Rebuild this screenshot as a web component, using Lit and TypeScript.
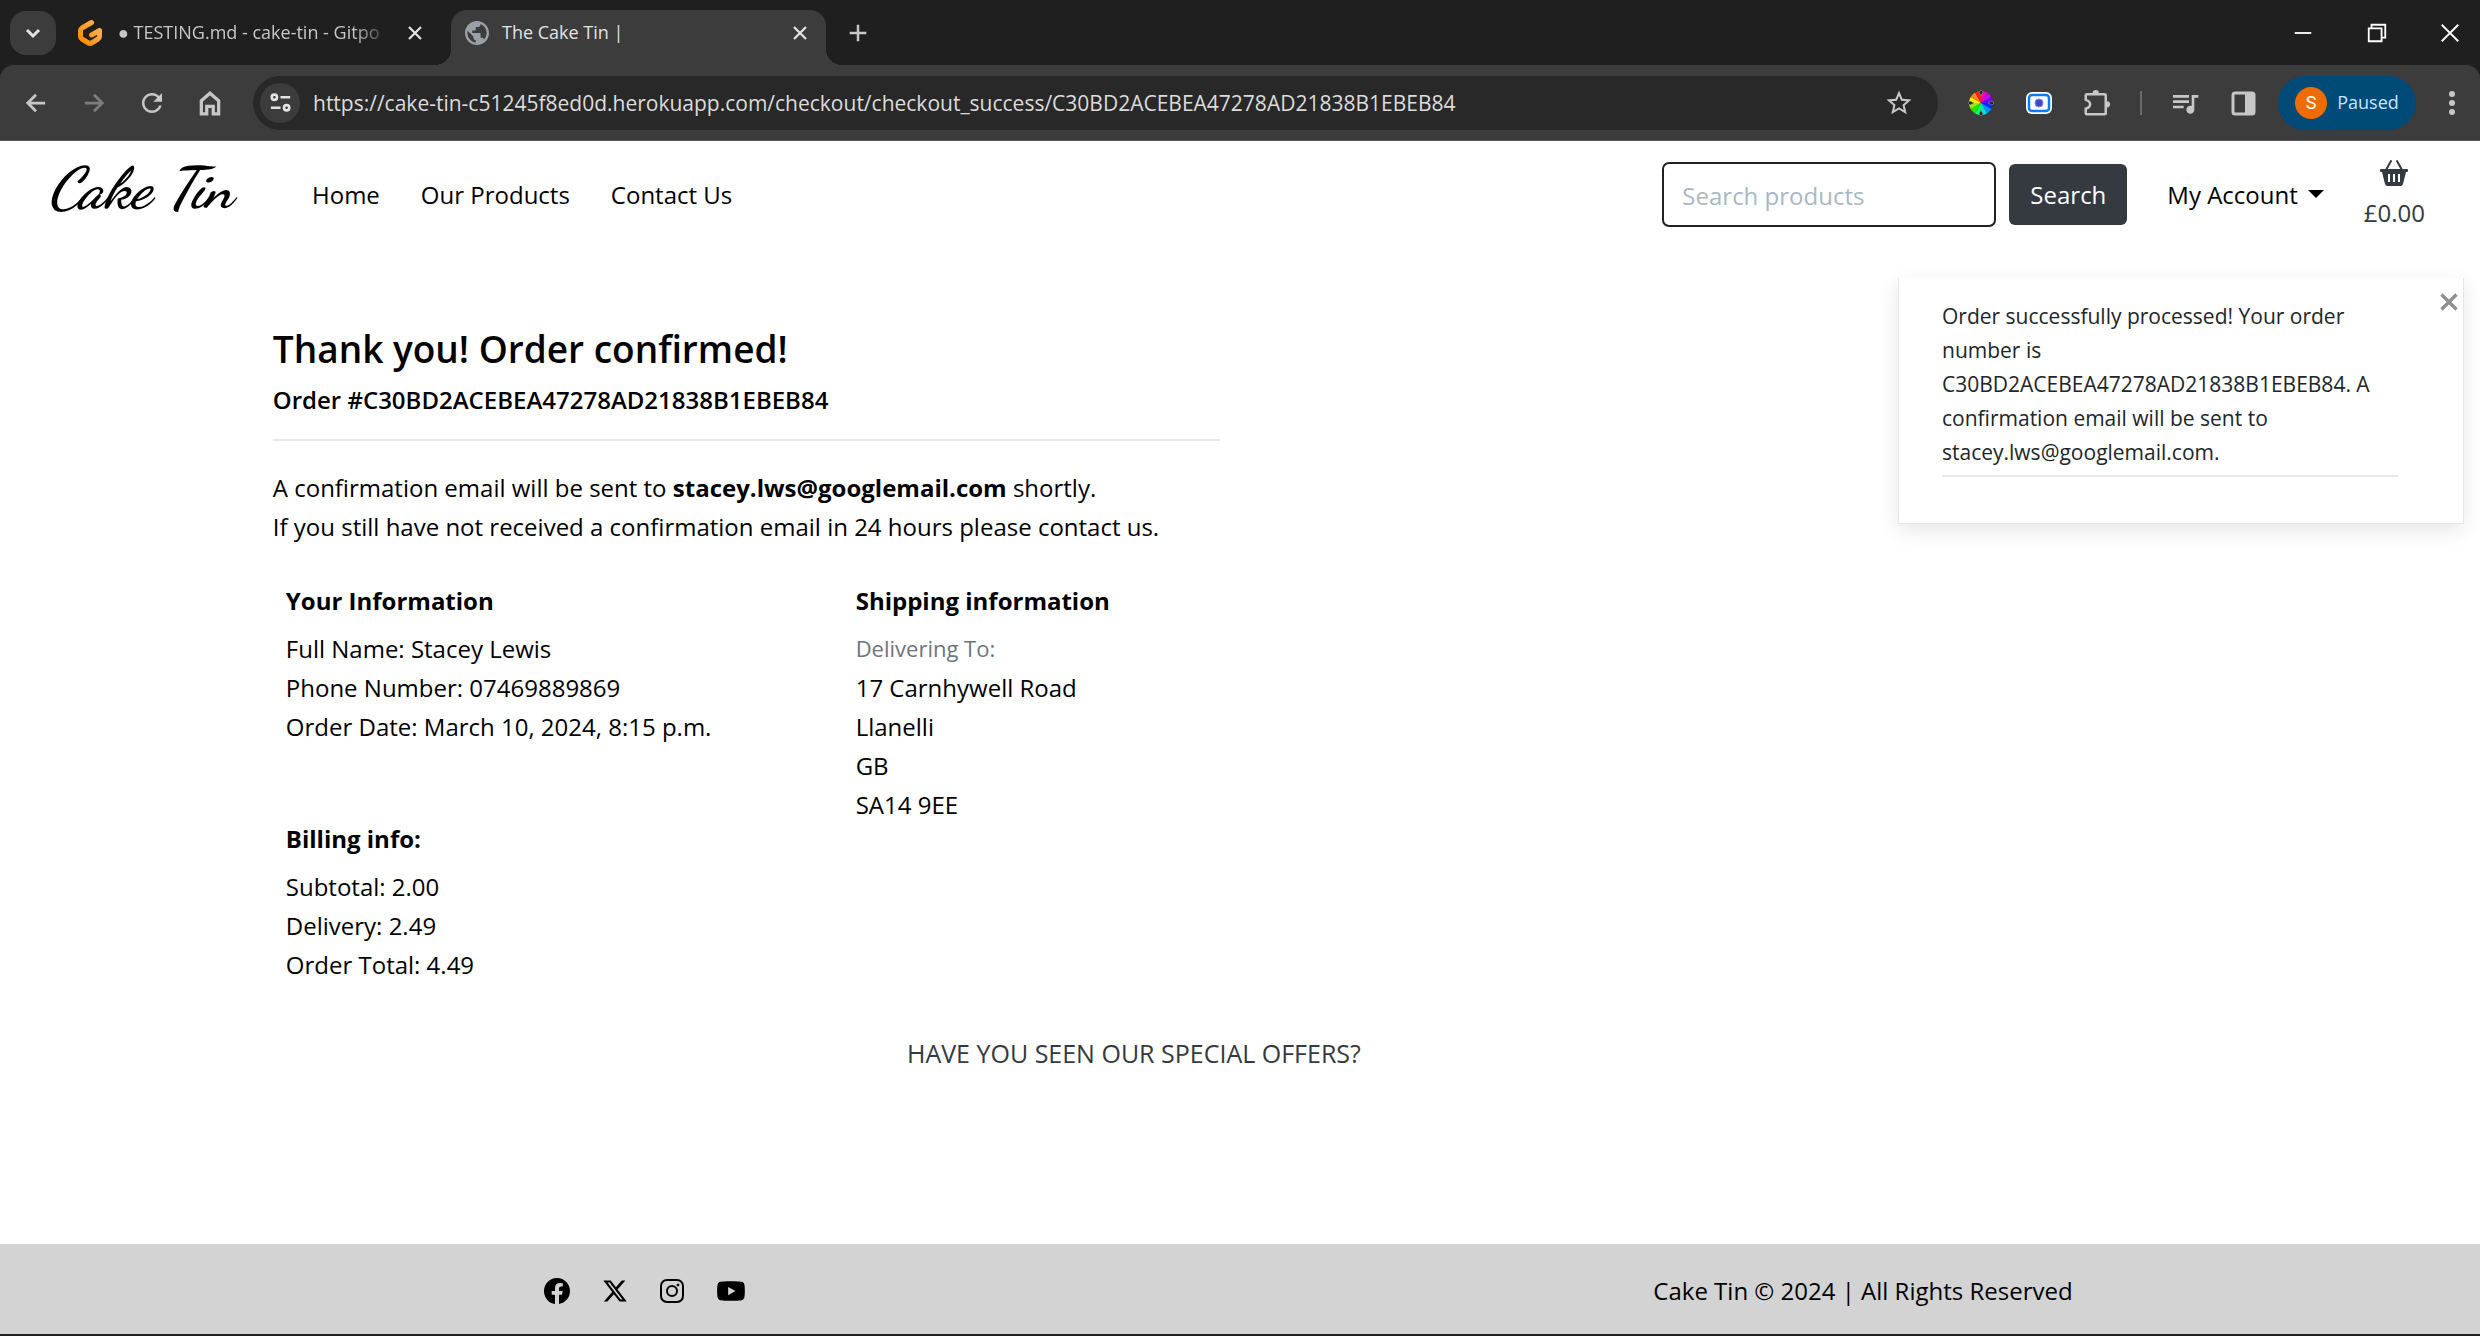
import { LitElement, html, css, svg } from "lit";
import { customElement, property } from "lit/decorators.js";

const line = (d: string, size = 24, width = 2) => html`<svg
  width=${size}
  height=${size}
  viewBox="0 0 24 24"
  fill="none"
  stroke="currentColor"
  stroke-width=${width}
  aria-hidden="true"
>
  <path d=${d} />
</svg>`;

const solid = (d: string, width: number, height: number, box = "0 0 24 24") => html`<svg
  width=${width}
  height=${height}
  viewBox=${box}
  fill="currentColor"
  aria-hidden="true"
>
  <path d=${d} />
</svg>`;

const CROSS = "M4 4l16 16M20 4L4 20";

const RELOAD =
  "M17.65 6.35C16.2 4.9 14.21 4 12 4c-4.42 0-7.99 3.58-7.99 8s3.57 8 7.99 8c3.73 0 6.84-2.55 7.73-6h-2.08c-.82 2.33-3.04 4-5.65 4-3.31 0-6-2.69-6-6s2.69-6 6-6c1.66 0 3.14.69 4.22 1.78L13 11h7V4l-2.35 2.35z";

const STAR =
  "M22 9.24l-7.19-.62L12 2 9.19 8.63 2 9.24l5.46 4.73L5.82 21 12 17.27 18.18 21l-1.63-7.03L22 9.24zM12 15.4l-3.76 2.27 1-4.28-3.32-2.88 4.38-.38L12 6.1l1.71 4.04 4.38.38-3.32 2.88 1 4.28L12 15.4z";

const QUEUE =
  "M15 6H3v2h12V6zm0 4H3v2h12v-2zM3 16h8v-2H3v2zM17 6v8.18c-.31-.11-.65-.18-1-.18-1.66 0-3 1.34-3 3s1.34 3 3 3 3-1.34 3-3V8h3V6h-5z";

const GLOBE =
  "M12 2C6.48 2 2 6.48 2 12s4.48 10 10 10 10-4.48 10-10S17.52 2 12 2zm-1 17.93c-3.95-.49-7-3.85-7-7.93 0-.62.08-1.21.21-1.79L9 15v1c0 1.1.9 2 2 2v1.93zm6.9-2.54c-.26-.81-1-1.39-1.9-1.39h-1v-3c0-.55-.45-1-1-1H8v-2h2c.55 0 1-.45 1-1V7h2c1.1 0 2-.9 2-2v-.41c2.93 1.19 5 4.06 5 7.41 0 2.08-.8 3.97-2.1 5.39z";

const gitpod = html`<svg width="26" height="28" viewBox="0 0 26 28" fill="none" aria-hidden="true">
  <defs>
    <linearGradient id="gp" x1="1" y1="0" x2="0" y2="1">
      <stop offset="0" stop-color="#ffb45b" />
      <stop offset="1" stop-color="#ff8a00" />
    </linearGradient>
  </defs>
  <path
    d="M14.500 3.500L5 9q-1.500 1-1.500 2.500v6q0 1.500 1.500 2.500l6.500 4q1.500 1 3 0l6.500-4q1.500-1 1.500-2.500v-6l-8 4.500"
    stroke="url(#gp)"
    stroke-width="5"
    stroke-linecap="round"
    stroke-linejoin="round"
  />
</svg>`;

const wheelColours = [
  "#ff00b0", "#c800ff", "#6a00ff", "#0028ff", "#0090ff", "#00e0e0",
  "#00ff70", "#20e800", "#90f000", "#fff000", "#ff8a00", "#ff1a1a",
];
const wheel = html`<svg width="28" height="28" viewBox="-14 -14 28 28" aria-hidden="true">
  ${wheelColours.map((c, i) => {
    const a = (i * 30 - 90) * (Math.PI / 180);
    const b = a + Math.PI / 6;
    const p = (t: number) => `${(Math.cos(t) * 12).toFixed(2)} ${(Math.sin(t) * 12).toFixed(2)}`;
    return svg`<path d="M0 0L${p(a)}A12 12 0 0 1 ${p(b)}z" fill=${c} />`;
  })}
  <path
    d="M0-13l2 2-2 4-2-4zM0 13l2-2-2-4-2 4zM-13 0l2-2 4 2-4 2zM13 0l-2-2-4 2 4 2z"
    fill="#222"
    stroke="#999"
    stroke-width="0.6"
  />
</svg>`;

const recorder = html`<svg width="28" height="24" viewBox="0 0 28 24" aria-hidden="true">
  <rect x="1" y="1" width="26" height="22" rx="6" fill="#fff" />
  <rect x="4" y="4" width="20" height="16" rx="3" fill="#fff" stroke="#0a78ff" stroke-width="2.500" />
  <circle cx="14" cy="12" r="4" fill="#3f48cc" stroke="#7d84e8" />
</svg>`;

const puzzle = html`<svg width="30" height="30" viewBox="0 0 24 24" aria-hidden="true">
  <path
    d="M4 5h14q1 0 1 1v14q0 1-1 1H4q-1 0-1-1v-3.500q3.500-1 3.500-3.500T3 9.500V6q0-1 1-1z"
    fill="none"
    stroke="currentColor"
    stroke-width="2"
  />
  <path d="M8.500 4a2.500 2.500 0 0 1 5 0zM20 10.500a2.500 2.500 0 0 1 0 5z" fill="currentColor" />
</svg>`;

const basket = html`<svg width="30" height="28" viewBox="0 0 30 28" aria-hidden="true">
  <path d="M12 2L7 11M18 2l5 9" stroke="currentColor" stroke-width="2" stroke-linecap="round" />
  <path
    fill="currentColor"
    fill-rule="evenodd"
    d="M2 10h26q1 0 1 1v1q0 1-1 1h-1l-3 12q-1 2-2 2H8q-1 0-2-2L3 13H2q-1 0-1-1v-1q0-1 1-1zM9 15v8h2v-8zM14 15v8h2v-8zM19 15v8h2v-8z"
  />
</svg>`;

@customElement("browser-chrome")
export class BrowserChrome extends LitElement {
  @property() address = "";

  static styles = css`
    :host {
      display: block;
      background: #1f1f1f;
      color: #e3e3e3;
      font-family: "Open Sans", "Noto Sans", sans-serif;
    }
    svg {
      display: block;
      flex: none;
    }
    button {
      display: flex;
      align-items: center;
      justify-content: center;
      flex: none;
      border: 0;
      padding: 0;
      background: none;
      color: #c7c7c7;
      font: inherit;
    }
    .strip {
      display: flex;
      align-items: flex-end;
      height: 65px;
    }
    .tab-search {
      align-self: center;
      width: 46px;
      height: 44px;
      margin: 0 10px;
      border-radius: 16px;
      background: #3c3c3c;
      color: #e3e3e3;
    }
    .tab {
      display: flex;
      align-items: center;
      gap: 13px;
      height: 55px;
      padding: 0 17px 10px 14px;
      box-sizing: border-box;
      font-size: 18px;
    }
    .tab.back {
      width: 385px;
      gap: 15px;
      padding-left: 11px;
      padding-right: 27px;
    }
    .tab.front {
      position: relative;
      width: 375px;
      border-radius: 16px 16px 0 0;
      background: #3c3c3c;
    }
    .tab.front::before,
    .tab.front::after {
      content: "";
      position: absolute;
      bottom: 0;
      width: 16px;
      height: 16px;
    }
    .tab.front::before {
      left: -16px;
      background: radial-gradient(circle at 0 0, transparent 16px, #3c3c3c 16px);
    }
    .tab.front::after {
      right: -16px;
      background: radial-gradient(circle at 100% 0, transparent 16px, #3c3c3c 16px);
    }
    .globe {
      color: #9aa0a6;
    }
    .title {
      flex: 1;
      white-space: nowrap;
    }
    .back .title {
      color: #c7c7c7;
      mask-image: linear-gradient(to right, #000 86%, transparent);
    }
    .tab button {
      color: #e3e3e3;
    }
    .new {
      width: 48px;
      height: 65px;
      margin-left: 8px;
    }
    .window {
      display: flex;
      margin-left: auto;
    }
    .window button {
      width: 74px;
      height: 65px;
      color: #fff;
    }
    .window button:last-child {
      width: 66px;
      padding-left: 6px;
    }
    .bar {
      display: flex;
      align-items: center;
      height: 76px;
      box-sizing: border-box;
      border-radius: 14px 14px 0 0;
      border-bottom: 1px solid #555;
      background: #3c3c3c;
    }
    .nav {
      display: flex;
      padding: 0 14px 0 7px;
    }
    .nav button {
      width: 58px;
      height: 54px;
    }
    .nav .off {
      color: #7d7d7d;
    }
    .omnibox {
      display: flex;
      align-items: center;
      flex: 1;
      height: 54px;
      border-radius: 27px;
      background: #282828;
    }
    .site {
      width: 40px;
      height: 40px;
      margin: 0 13px 0 7px;
      border-radius: 20px;
      background: #3c3c3c;
      color: #e3e3e3;
    }
    .omnibox input {
      flex: 1;
      min-width: 0;
      height: 40px;
      border: 0;
      padding: 0;
      background: none;
      color: #dcdcdc;
      font: 21px/40px "Open Sans", "Noto Sans", sans-serif;
      outline: 0;
    }
    .star {
      width: 78px;
      height: 54px;
    }
    .tools {
      display: flex;
      align-items: center;
      padding-left: 14px;
    }
    .tools button {
      width: 58px;
      height: 54px;
    }
    .rule {
      width: 2px;
      height: 24px;
      margin: 0 14px 0 14px;
      background: #6a6a6a;
    }
    .tools .profile {
      gap: 10px;
      width: 138px;
      margin-left: 6px;
      border-radius: 27px;
      background: #004a77;
      color: #c2e7ff;
      font-size: 18px;
    }
    .avatar {
      display: flex;
      align-items: center;
      justify-content: center;
      width: 32px;
      height: 32px;
      border-radius: 16px;
      background: #ef6c00;
      color: #fff;
      font: 18px Roboto, sans-serif;
    }
    .tools .more {
      width: 64px;
      padding-left: 8px;
    }
  `;

  render() {
    return html`
      <div class="strip">
        <button class="tab-search" aria-label="Search tabs">${line("M4 8l8 8 8-8", 18, 4)}</button>
        <div class="tab back">
          ${gitpod}
          <span class="title">● TESTING.md - cake-tin - Gitpo</span>
          <button aria-label="Close tab">${line(CROSS, 18, 3)}</button>
        </div>
        <div class="tab front">
          <span class="globe">${solid(GLOBE, 24, 24, "2 2 20 20")}</span>
          <span class="title">The Cake Tin |</span>
          <button aria-label="Close tab">${line(CROSS, 18, 3)}</button>
        </div>
        <button class="new" aria-label="New tab">${line("M12 2v20M2 12h20", 20, 3)}</button>
        <div class="window">
          <button aria-label="Minimise">${line("M3 12h18", 22, 2)}</button>
          <button aria-label="Restore">${line("M3 7h14v14H3zM6 7V3h15v14h-4", 22, 2)}</button>
          <button aria-label="Close window">${line("M3 3l18 18M21 3L3 21", 22, 2)}</button>
        </div>
      </div>
      <div class="bar">
        <div class="nav">
          <button aria-label="Back">${line("M22 12H3M12 3l-9 9 9 9", 22, 3)}</button>
          <button class="off" aria-label="Forward">${line("M2 12h19M12 3l9 9-9 9", 22, 3)}</button>
          <button aria-label="Reload">${solid(RELOAD, 30, 30)}</button>
          <button aria-label="Home">
            ${line("M4 10l8-7 8 7v12h-5v-7H9v7H4z", 26, 3)}
          </button>
        </div>
        <div class="omnibox">
          <button class="site" aria-label="View site information">
            ${line("M2 6a3 3 0 1 0 6 0a3 3 0 1 0-6 0M12 6h11M1 18h11M16 18a3 3 0 1 0 6 0a3 3 0 1 0-6 0", 21, 3)}
          </button>
          <input type="text" aria-label="Address" .value=${this.address} />
          <button class="star" aria-label="Bookmark this tab">${solid(STAR, 30, 30)}</button>
        </div>
        <div class="tools">
          <button aria-label="Colour picker">${wheel}</button>
          <button aria-label="Screen recorder">${recorder}</button>
          <button aria-label="Extensions">${puzzle}</button>
          <span class="rule"></span>
          <button aria-label="Media controls">${solid(QUEUE, 32, 32)}</button>
          <button aria-label="Side panel">
            <svg width="26" height="26" viewBox="0 0 26 26" fill="none" aria-hidden="true">
              <rect x="3" y="3" width="21" height="21" rx="2" stroke="currentColor" stroke-width="3" />
              <path d="M15 3h9v21h-9z" fill="currentColor" />
            </svg>
          </button>
          <button class="profile"><span class="avatar">S</span>Paused</button>
          <button class="more" aria-label="Menu">
            ${solid(
              "M4 0a3 3 0 1 0 0 6a3 3 0 1 0 0-6zM4 9a3 3 0 1 0 0 6a3 3 0 1 0 0-6zM4 18a3 3 0 1 0 0 6a3 3 0 1 0 0-6z",
              8,
              24,
              "0 0 8 24"
            )}
          </button>
        </div>
      </div>
    `;
  }
}

@customElement("shop-header")
export class ShopHeader extends LitElement {
  static styles = css`
    :host {
      display: flex;
      align-items: center;
      height: 106px;
      padding: 0 55px 0 48px;
      box-sizing: border-box;
      color: #000;
    }
    a {
      color: inherit;
      text-decoration: none;
    }
    .brand {
      width: 264px;
      padding-bottom: 10px;
      font: italic 700 58px/60px "Dancing Script", "Pacifico", "Liberation Serif", cursive;
    }
    nav {
      display: flex;
      gap: 41px;
    }
    form {
      display: flex;
      align-items: center;
      gap: 13px;
      margin: 0 40px 0 auto;
    }
    input {
      width: 334px;
      height: 65px;
      box-sizing: border-box;
      border: 2px solid #222;
      border-radius: 7px;
      padding: 2px 18px 0;
      background: #fff;
      font: inherit;
    }
    input::placeholder {
      color: #aab7c4;
      opacity: 1;
    }
    form button {
      width: 118px;
      height: 61px;
      border: 0;
      border-radius: 6px;
      padding: 0;
      background: #343a40;
      color: #fff;
      font: inherit;
    }
    .account {
      display: flex;
      align-items: center;
      gap: 10px;
      border: 0;
      padding: 0;
      background: none;
      color: inherit;
      font: inherit;
    }
    .caret {
      border: 8px solid transparent;
      border-top-color: #000;
      border-bottom: 0;
    }
    .bag {
      display: flex;
      flex-direction: column;
      align-items: center;
      margin-left: 40px;
      padding-top: 2px;
      color: #343a40;
    }
    svg {
      display: block;
      margin-bottom: 6px;
    }
  `;

  render() {
    return html`
      <a class="brand" href="#home">Cake Tin</a>
      <nav>
        <a href="#home">Home</a>
        <a href="#products">Our Products</a>
        <a href="#contact">Contact Us</a>
      </nav>
      <form role="search">
        <input type="search" aria-label="Search products" placeholder="Search products" />
        <button type="button">Search</button>
      </form>
      <button class="account" aria-haspopup="menu">My Account<span class="caret"></span></button>
      <a class="bag" href="#bag">${basket}£0.00</a>
    `;
  }
}

@customElement("order-toast")
export class OrderToast extends LitElement {
  @property() order = "";
  @property() email = "";

  static styles = css`
    :host {
      display: block;
      width: 566px;
      box-sizing: border-box;
      padding: 21px 65px 46px 43px;
      border: 1px solid #e6e6e6;
      border-top: 0;
      background: #fff;
      box-shadow: 0 6px 20px rgba(0, 0, 0, 0.1);
      color: #212529;
      font-size: 21px;
      line-height: 34px;
    }
    p {
      margin: 0;
      padding-bottom: 6px;
      border-bottom: 2px solid #e8e8e8;
    }
    button {
      position: absolute;
      top: 12px;
      right: 2px;
      display: flex;
      border: 0;
      padding: 2px;
      background: none;
      color: #8f8f8f;
    }
  `;

  render() {
    const message = `Order successfully processed! Your order number is ${this.order}. A confirmation email will be sent to ${this.email}.`;
    return html`
      <button aria-label="Close">${line("M3 3l18 18M21 3L3 21", 20, 4)}</button>
      <p>${message}</p>
    `;
  }
}

@customElement("order-summary")
export class OrderSummary extends LitElement {
  @property() order = "";
  @property() email = "";

  static styles = css`
    :host {
      display: block;
      width: 55%;
    }
    h1,
    h2,
    h3,
    p {
      margin: 0;
    }
    h1 {
      font-size: 37px;
      line-height: 48px;
      font-weight: 600;
    }
    h2 {
      margin-top: 7px;
      font-size: 24px;
      line-height: 39px;
      font-weight: 600;
    }
    .lead {
      margin-top: 20px;
      border-top: 2px solid #e8e8e8;
      padding: 27px 0 35px;
      white-space: nowrap;
    }
    .columns {
      display: grid;
      grid-template-columns: 61fr 39fr;
      padding-left: 13px;
      white-space: nowrap;
    }
    .left {
      display: grid;
      gap: 73px;
    }
    h3 {
      margin-bottom: 9px;
      font-size: 24px;
      line-height: 39px;
      font-weight: 700;
    }
    .muted {
      color: #6c757d;
      font-size: 22px;
    }
  `;

  render() {
    return html`
      <h1>Thank you! Order confirmed!</h1>
      <h2>Order #${this.order}</h2>
      <div class="lead">
        <p>A confirmation email will be sent to <strong>${this.email}</strong> shortly.</p>
        <p>
          If you still have not received a confirmation email in 24 hours please contact us.
        </p>
      </div>
      <div class="columns">
        <div class="left">
          <section>
            <h3>Your Information</h3>
            <p>Full Name: Stacey Lewis</p>
            <p>Phone Number: 07469889869</p>
            <p>Order Date: March 10, 2024, 8:15 p.m.</p>
          </section>
          <section>
            <h3>Billing info:</h3>
            <p>Subtotal: 2.00</p>
            <p>Delivery: 2.49</p>
            <p>Order Total: 4.49</p>
          </section>
        </div>
        <section>
          <h3>Shipping information</h3>
          <p class="muted">Delivering To:</p>
          <p>17 Carnhywell Road</p>
          <p>Llanelli</p>
          <p>GB</p>
          <p>SA14 9EE</p>
        </section>
      </div>
    `;
  }
}

@customElement("shop-footer")
export class ShopFooter extends LitElement {
  static styles = css`
    :host {
      display: grid;
      grid-template-columns: 1fr 1fr;
      align-items: center;
      justify-items: center;
      height: 92px;
      box-sizing: border-box;
      padding: 3px 0 0 12px;
      border-bottom: 2px solid #222;
      background: #d3d3d3;
      color: #000;
    }
    ul {
      display: flex;
      align-items: center;
      gap: 32px;
      margin: 0;
      padding: 0 0 0 32px;
      list-style: none;
    }
    a {
      display: block;
      color: inherit;
    }
    svg {
      display: block;
    }
    p {
      margin: 0;
    }
  `;

  render() {
    return html`
      <ul>
        <li>
          <a href="#facebook" aria-label="Facebook">
            ${solid(
              "M16 8.049c0-4.446-3.582-8.05-8-8.05C3.58 0-.002 3.603-.002 8.05c0 4.017 2.926 7.347 6.75 7.951v-5.625h-2.03V8.05H6.75V6.275c0-2.017 1.195-3.131 3.022-3.131.876 0 1.791.157 1.791.157v1.98h-1.009c-.993 0-1.303.621-1.303 1.258v1.51h2.218l-.354 2.326H9.25V16c3.824-.604 6.75-3.934 6.75-7.951",
              26,
              26,
              "0 0 16 16"
            )}
          </a>
        </li>
        <li>
          <a href="#x" aria-label="X">
            ${solid(
              "M389.2 48h70.6L305.6 224.2 487 464H345L233.7 318.6 106.5 464H35.8L200.7 275.5 26.8 48H172.4L272.9 180.9 389.2 48zM364.4 421.8h39.1L151.1 88h-42L364.4 421.8z",
              26,
              26,
              "0 0 512 512"
            )}
          </a>
        </li>
        <li>
          <a href="#instagram" aria-label="Instagram">
            <svg width="24" height="24" viewBox="0 0 24 24" fill="none" stroke="currentColor" stroke-width="2" aria-hidden="true">
              <rect x="1" y="1" width="22" height="22" rx="6" />
              <circle cx="12" cy="12" r="5" />
              <circle cx="18" cy="6" r="1" stroke-width="1" fill="currentColor" />
            </svg>
          </a>
        </li>
        <li>
          <a href="#youtube" aria-label="YouTube">
            ${solid(
              "M549.655 124.083c-6.281-23.65-24.787-42.276-48.284-48.597C458.781 64 288 64 288 64S117.22 64 74.629 75.486c-23.497 6.322-42.003 24.947-48.284 48.597-11.412 42.867-11.412 132.305-11.412 132.305s0 89.438 11.412 132.305c6.281 23.65 24.787 41.5 48.284 47.821C117.22 448 288 448 288 448s170.78 0 213.371-11.486c23.497-6.321 42.003-24.171 48.284-47.821 11.412-42.867 11.412-132.305 11.412-132.305s0-89.438-11.412-132.305zm-317.51 213.508V175.185l142.739 81.205-142.739 81.201z",
              30,
              26,
              "0 0 576 512"
            )}
          </a>
        </li>
      </ul>
      <p>Cake Tin © 2024 | All Rights Reserved</p>
    `;
  }
}

@customElement("app-root")
export class AppRoot extends LitElement {
  private order = "C30BD2ACEBEA47278AD21838B1EBEB84";
  private email = "stacey.lws@googlemail.com";

  static styles = css`
    :host {
      display: flex;
      flex-direction: column;
      min-height: 100vh;
      background: #fff;
      color: #000;
      font: 24px/39px "Open Sans", "Noto Sans", sans-serif;
    }
    .page {
      position: relative;
      flex: 1;
      padding: 78px 485px 0 11%;
    }
    order-toast {
      position: absolute;
      top: 31px;
      right: 16px;
    }
    .offers {
      margin: 50px 0 0;
      color: #343a40;
      font-size: 25px;
      text-align: center;
    }
  `;

  render() {
    return html`
      <browser-chrome
        address="https://cake-tin-c51245f8ed0d.herokuapp.com/checkout/checkout_success/${this.order}"
      ></browser-chrome>
      <shop-header></shop-header>
      <main class="page">
        <order-toast .order=${this.order} .email=${this.email}></order-toast>
        <order-summary .order=${this.order} .email=${this.email}></order-summary>
        <p class="offers">HAVE YOU SEEN OUR SPECIAL OFFERS?</p>
      </main>
      <shop-footer></shop-footer>
    `;
  }
}
